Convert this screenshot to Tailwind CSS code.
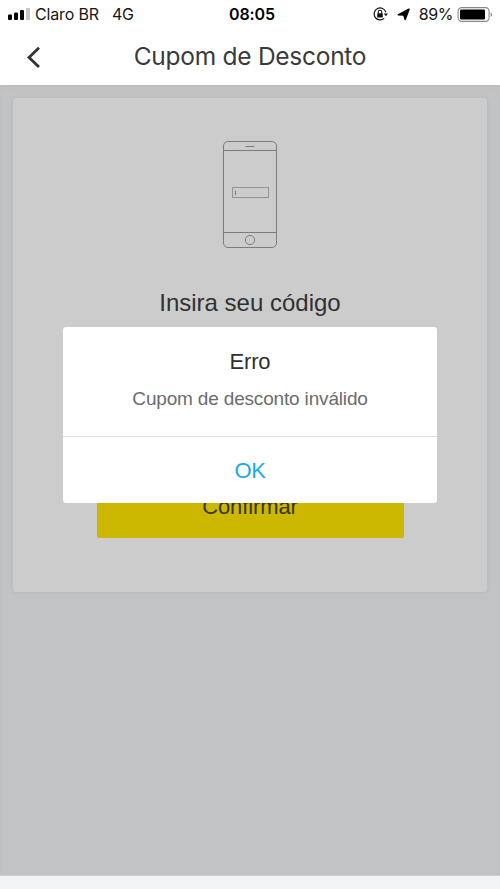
<!DOCTYPE html>
<html lang="pt-BR">
<head>
<meta charset="utf-8">
<meta name="viewport" content="width=device-width, initial-scale=1">
<title>Cupom de Desconto</title>
<script src="https://cdn.jsdelivr.net/npm/@tailwindcss/browser@4"></script>
</head>
<body class="bg-white">
<div class="relative flex h-[889px] w-[500px] flex-col overflow-hidden font-['Liberation_Sans',Arial,sans-serif]">
  <header class="h-[85px] shrink-0 bg-white font-[Inter,sans-serif]">
    <div class="grid h-7 grid-cols-3 items-center pl-2 pr-[7px] text-[16px] leading-7 text-[#161616]">
      <div class="flex items-center whitespace-nowrap">
        <svg class="mr-[5px] h-3 w-[22px] shrink-0" viewBox="0 0 22 12">
          <rect x="0" y="6.5" width="4" height="5.5" rx="1" fill="#000"/>
          <rect x="6" y="4.5" width="4" height="7.5" rx="1" fill="#000"/>
          <rect x="12" y="2" width="4" height="10" rx="1" fill="#000"/>
          <rect x="18" y="0" width="4" height="12" rx="1" fill="#c6c6c6"/>
        </svg>
        <span class="tracking-[-0.15px]">Claro BR</span><span class="ml-[13px] tracking-[-0.4px]">4G</span>
      </div>
      <div class="pl-[3px] text-center font-semibold tracking-[-0.1px] text-black">08:05</div>
      <div class="flex items-center justify-end">
        <svg class="mr-[9px] h-[14px] w-[15px]" viewBox="0 0 15 14" fill="none" stroke="#111">
          <path d="M12.9 5.2A6 6 0 1 0 11.2 11.4" stroke-width="1.2"/>
          <path d="M10.7 6.4h4.2L12.9 9.2z" fill="#111" stroke="none"/>
          <rect x="4.2" y="6.2" width="5.6" height="4.2" rx=".5" fill="#111" stroke="none"/>
          <path d="M5.3 6.4V5a1.7 1.7 0 0 1 3.4 0v1.4" stroke-width="1.1"/>
        </svg>
        <svg class="mr-[9px] h-[13px] w-[13px]" viewBox="0 0 13 13"><path d="M12 1.2 8.2 11.6 6.8 7 1.2 6.8z" fill="#000" stroke="#000" stroke-width="1.5" stroke-linejoin="round"/></svg>
        <span class="mr-1 tracking-[-0.4px]">89%</span>
        <svg class="h-[15px] w-[36px]" viewBox="0 0 36 15">
          <rect x="1.1" y=".6" width="31" height="13.8" rx="3.6" fill="none" stroke="#888" stroke-width="1.1"/>
          <rect x="3" y="2.5" width="25" height="10" rx="1.2" fill="#000"/>
          <path d="M33.7 5.2c1.7.6 1.7 4 0 4.6z" fill="#888"/>
        </svg>
      </div>
    </div>
    <div class="grid h-[57px] grid-cols-[60px_1fr_60px] items-center">
      <svg class="ml-[26px] h-[22px] w-4" viewBox="0 0 16 22" fill="none" stroke="#333" stroke-width="2.8"><path d="M13 1.8 3 11.4 13 21"/></svg>
      <h1 class="text-center text-[24.5px] leading-[57px] tracking-[-0.27px] text-[#3a3a3a]">Cupom de Desconto</h1>
    </div>
  </header>

  <main class="flex h-[791px] shrink-0 flex-col border-b border-[#cfcfcf] bg-[#c2c3c4] px-[13px] pt-[13px] shadow-[inset_0_3px_4px_-2px_#b8baba]">
    <section class="flex h-[494px] flex-col items-center rounded-[3px] bg-[#ccc] pt-[43px] shadow-[0_0_4px_#b2b4b7]">
      <svg class="h-[108px] w-[54px]" viewBox="0 0 54 108" fill="none" stroke="#7c7c7c">
        <rect x=".5" y=".5" width="53" height="106" rx="4.5"/>
        <path d="M.5 9.5h53M.5 91.5h53"/>
        <path d="M22.5 5.5h9"/>
        <circle cx="27" cy="99" r="4.6"/>
        <rect x="9.5" y="46.5" width="36" height="10" stroke="#939393"/>
        <path d="M12.5 49.5v4.5"/>
      </svg>
      <h2 class="mt-[40px] text-[24px] leading-7 text-[#303030]">Insira seu código</h2>
      <button class="mt-[157px] h-[64px] w-[307px] rounded-[2px] bg-[#ccb800] pt-px text-[22px] leading-[64px] tracking-[-0.1px] text-[#3a3510]">Confirmar</button>
    </section>
  </main>
  <footer class="h-[13px] bg-[#f3f4f6]"></footer>

  <div role="dialog" class="absolute left-[63px] top-[327px] flex h-[176px] w-[374px] flex-col rounded-[3px] bg-white text-center">
    <div class="h-[110px] shrink-0 border-b border-[#dedede] pt-[22px]">
      <h3 class="text-[22px] leading-[26px] tracking-[-0.2px] text-[#303030]">Erro</h3>
      <p class="mt-[13px] text-[19px] leading-[22px] tracking-[-0.17px] text-[#6c6c6c]">Cupom de desconto inválido</p>
    </div>
    <button class="h-[66px] shrink-0 text-[22px] leading-[68px] tracking-[-0.3px] text-[#18aae8]">OK</button>
  </div>
</div>
</body>
</html>
